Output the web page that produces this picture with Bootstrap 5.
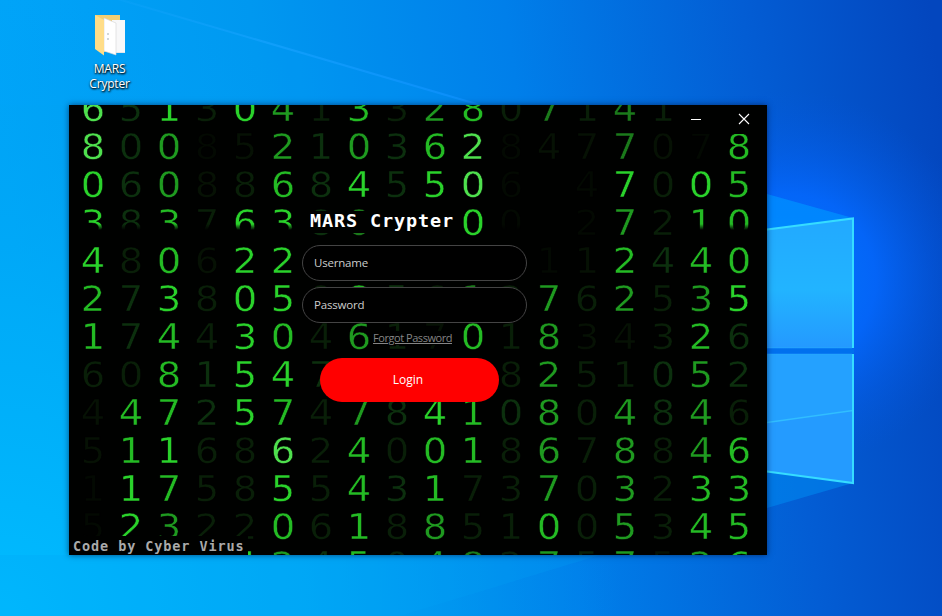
<!DOCTYPE html>
<html lang="en">
<head>
<meta charset="utf-8">
<meta name="viewport" content="width=device-width, initial-scale=1">
<title>MARS Crypter</title>
<link href="https://cdn.jsdelivr.net/npm/bootstrap@5.3.0/dist/css/bootstrap.min.css" rel="stylesheet">
<style>
  body { font-family: "Open Sans", "Noto Sans", sans-serif; font-size: 12px; }
  .desktop { width: 942px; height: 616px; background: #007fe8; }
  .wallpaper { width: 942px; height: 616px; }
  .shortcut { left: 79px; top: 13px; width: 61px; color: #fff; line-height: 15px; text-shadow: 1px 1px 2px #000, 0 1px 2px rgba(0,0,0,.8); letter-spacing: -.2px; }
  .app-window { left: 69px; top: 105px; width: 698px; height: 450px; background: #000100; box-shadow: 0 0 6px rgba(0,20,60,.65); }
  .stack { grid-template: 450px / 698px; }
  .stack > * { grid-area: 1 / 1; }
  .rain { font-family: "DejaVu Sans", sans-serif; font-size: 36px; line-height: 38px; padding-left: 5.4px; margin-top: -15.5px; -webkit-text-stroke: .5px #000100; }
  .rain-row { height: 38px; }
  .rain-row span { width: 38px; height: 38px; text-align: center; transform: scaleX(1.07); }
  .cut { -webkit-mask-image: linear-gradient(#000 20px, transparent 26px); mask-image: linear-gradient(#000 20px, transparent 26px); }
  .s1 { color: #061104; } .s2 { color: #091f08; } .s3 { color: #0c300e; } .s4 { color: #030902; }
  .s5 { color: #1b7a1b; } .s6 { color: #1f9a20; } .s7 { color: #24bb24; }
  .s8 { color: #2ad22b; } .s9 { color: #4fe04e; }
  .chrome-btns { background: #000100; width: 95px; height: 29px; }
  .chrome-btns button { width: 48px; height: 28px; }
  .chrome-btns .close-btn { padding-left: 2px; }
  .login-form { width: 225px; margin-left: 233px; margin-top: 77px; }
  .app-title { font: bold 18.5px/20px "DejaVu Sans Mono", monospace; letter-spacing: .87px; background: #000100; height: 22px; padding-left: 5px; margin: 0 64px 12px 3px; color: #fff; }
  .fields { row-gap: 6px; }
  .field { height: 36px; border: 1px solid #444; background: #000; color: #ccc; padding: 0 11px 2px; font-size: 11.5px; letter-spacing: -.2px; }
  .field:focus { background: #000; color: #ccc; }
  .field::placeholder { color: #ccc; opacity: 1; }
  .forgot { color: #858585; background: #000100; font-size: 11px; line-height: 14px; margin-top: 8px; margin-left: 71px; width: 79px; letter-spacing: -.45px; }
  .forgot:hover { color: #aaa; }
  .login { width: 179px; height: 44px; margin: 12.5px 0 0 17.5px; background: #f00; color: #fff; font-size: 12px; padding: 0 2px 0 0; }
  .login:hover { background: #e00; color: #fff; }
  .credit { font: bold 13.5px/21px "DejaVu Sans Mono", monospace; letter-spacing: .9px; color: #aaa; background: #000100; width: 179px; height: 19px; padding-left: 4px; }
</style>
</head>
<body class="overflow-hidden">
<main class="desktop position-relative overflow-hidden">
  <svg class="wallpaper d-block" viewBox="0 0 942 616" aria-hidden="true">
    <defs>
      <linearGradient id="sky" gradientUnits="userSpaceOnUse" x1="0" y1="120" x2="930" y2="0">
        <stop offset="0" stop-color="#00a5f8"/><stop offset=".28" stop-color="#0098f0"/>
        <stop offset=".55" stop-color="#007fea"/><stop offset=".8" stop-color="#035dd4"/>
        <stop offset="1" stop-color="#0346be"/>
      </linearGradient>
      <radialGradient id="low" gradientUnits="userSpaceOnUse" cx="0" cy="616" r="620">
        <stop offset="0" stop-color="#00bcff"/><stop offset=".5" stop-color="#00aef8" stop-opacity=".7"/><stop offset="1" stop-color="#009cf0" stop-opacity="0"/>
      </radialGradient>
      <radialGradient id="glow" gradientUnits="userSpaceOnUse" cx="790" cy="280" r="190">
        <stop offset="0" stop-color="#0078ff"/><stop offset=".45" stop-color="#0468ff" stop-opacity=".85"/><stop offset="1" stop-color="#0455dd" stop-opacity="0"/>
      </radialGradient>
      <linearGradient id="pane" x1="0" y1="0" x2="0" y2="1">
        <stop offset="0" stop-color="#22a9ff"/><stop offset=".55" stop-color="#22b4ff"/><stop offset="1" stop-color="#2499ff"/>
      </linearGradient>
      <linearGradient id="ray" gradientUnits="userSpaceOnUse" x1="80" y1="0" x2="480" y2="0">
        <stop offset="0" stop-color="#19a8ff" stop-opacity=".1"/><stop offset=".5" stop-color="#16a2ff"/><stop offset="1" stop-color="#1090ff"/>
      </linearGradient>
    </defs>
    <rect width="942" height="616" fill="url(#sky)"/>
    <rect width="942" height="616" fill="url(#low)"/>
    <rect width="942" height="616" fill="url(#glow)"/>
    <path d="M80-12 480 105H0V0z" fill="#00a8ff" fill-opacity=".12"/>
    <path d="M80-12 480 105" stroke="url(#ray)" stroke-width="2" stroke-opacity=".7"/>
    <path d="M767 194 853 218 767 230z" fill="#0090ff" fill-opacity=".75"/>
    <path d="M767 470 853 483 767 508z" fill="#0087ee" fill-opacity=".6"/>
    <path d="M400 555H600L400 616H0V555z" fill="#00a4f8" fill-opacity=".22"/>
    <path d="M700 239 853 218V348H700z" fill="url(#pane)"/>
    <path d="M700 354H853V483L700 462z" fill="#249bff"/>
    <path d="M700 354H853V410L700 431z" fill="#25a4ff" fill-opacity=".7"/>
    <path d="M767 422.500 853 410.500" stroke="#31beff" stroke-width="1.500"/>
    <path d="M767 348H852M767 354H852" stroke="#24a9fb"/>
    <path d="M767 229.500 853 218.500V348M853 354V483L767 471.500" fill="none" stroke="#36dcff" stroke-width="2"/>
    <path d="M767 351H854" stroke="#0070ee" stroke-width="5"/>
  </svg>

  <div class="shortcut position-absolute d-flex flex-column align-items-center text-center">
    <svg width="34" height="44" viewBox="0 0 34 44" class="mb-1" aria-hidden="true">
      <path d="M2 2h25v37H10z" fill="#f4ce72"/>
      <path d="M13 9 32 7v33H20z" fill="#e4e6ea"/>
      <path d="M19 7h13v32H20z" fill="#f8f8f9"/>
      <path d="M11 5 23 10v32L11 38z" fill="#fff" stroke="#d4d4d4" stroke-width=".6"/>
      <path d="M2 2 11 7v35.500L2 36z" fill="#ffdd88"/>
      <path d="M14 21h2M14 26h2" stroke="#a3afb5"/>
    </svg>
    <span>MARS<br>Crypter</span>
  </div>

  <section class="app-window position-absolute overflow-hidden d-grid stack">
    <div class="rain" id="rain" aria-hidden="true"></div>
    <div class="d-flex flex-column position-relative">
      <div class="chrome-btns d-flex align-self-end">
        <button class="btn p-0 border-0 rounded-0 d-flex align-items-center justify-content-center" aria-label="Minimize"><svg width="12" height="12" viewBox="0 0 12 12"><path d="M1 6.500h10" stroke="#fff"/></svg></button>
        <button class="btn close-btn py-0 pe-0 border-0 rounded-0 d-flex align-items-center justify-content-center" aria-label="Close"><svg width="12" height="12" viewBox="0 0 12 12"><path d="M1 1l10 10M11 1 1 11" stroke="#fff" stroke-width="1.100"/></svg></button>
      </div>
      <form class="login-form d-flex flex-column">
        <h1 class="app-title text-nowrap">MARS Crypter</h1>
        <div class="fields d-grid">
          <input class="form-control rounded-pill field shadow-none" type="text" placeholder="Username" aria-label="Username">
          <input class="form-control rounded-pill field shadow-none" type="text" placeholder="Password" aria-label="Password">
        </div>
        <a class="forgot text-nowrap" href="#">Forgot Password</a>
        <button type="button" class="btn rounded-pill border-0 login">Login</button>
      </form>
      <div class="credit mt-auto text-nowrap">Code by Cyber Virus</div>
    </div>
  </section>
</main>
<script src="https://cdn.jsdelivr.net/npm/bootstrap@5.3.0/dist/js/bootstrap.bundle.min.js"></script>
<script>
  // Each row: the digits, then the shade class number of each one.
  const rows = [
    ["6513041332807141  ", "938286272672525200"],
    ["800852103628477078", "936416363794115147"],
    ["060886845506 47005", "836127383894048287"],
    ["38376380  00 27210", "837288350084046277"],
    ["480622      112440", "827188000000417377"],
    ["273805085612762535", "738288273252626268"],
    ["174430461701834326", "737287262172611273"],
    ["6081547    8251052", "227388300002622363"],
    ["447257478410804846", "177387263873626362"],
    ["511686240018678846", "178229272772626267"],
    ["117585543173703233", "487228273722626277"],
    ["523220618851005345", "486227272622726277"],
    ["    42450482757526", "000086372652626167"]
  ];
  // Digits of the fourth row that fade out before their baseline.
  const fading = [0, 1, 2, 3, 4, 5, 11, 16, 17];
  const rain = document.getElementById("rain");
  rows.forEach(([digits, shades], r) => {
    const line = document.createElement("div");
    line.className = "rain-row d-flex";
    [...digits].forEach((d, i) => {
      const cell = document.createElement("span");
      cell.className = "flex-shrink-0 s" + shades[i] + (r === 3 && fading.includes(i) ? " cut" : "");
      cell.textContent = d;
      line.append(cell);
    });
    rain.append(line);
  });
</script>
</body>
</html>
